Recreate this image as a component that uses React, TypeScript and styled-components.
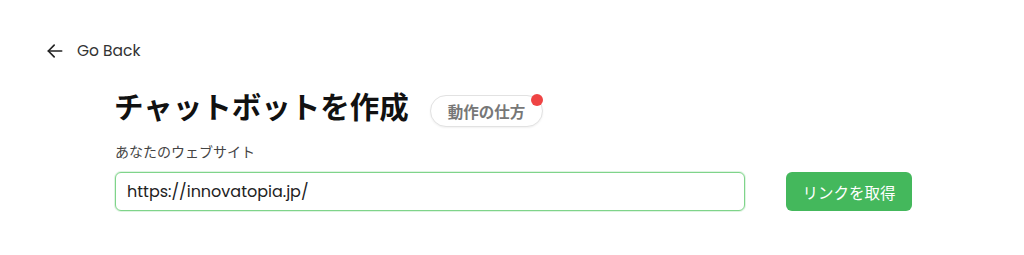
import { FC } from 'react'
import styled, { createGlobalStyle } from 'styled-components'

const GlobalStyle = createGlobalStyle`
  body {
    margin: 0;
    background: #ffffff;
    font-family: Poppins, "Open Sans", "Noto Sans CJK JP", sans-serif;
    color: #222;
  }
`

const Page = styled.div`
  padding: 41px 0 0 45px;
  height: 255px;
  box-sizing: border-box;
  display: flex;
  flex-direction: column;
  align-items: flex-start;
`
const BackLink = styled.a`
  display: flex;
  align-items: center;
  gap: 12px;
  height: 20px;
  line-height: 20px;
  font-size: 15.5px;
  color: #333;
  text-decoration: none;
  cursor: pointer;
`
const Main = styled.div`
  margin: 27px 0 0 70px;
  display: flex;
  flex-direction: column;
`
const TitleRow = styled.div`
  display: flex;
  align-items: flex-start;
  gap: 21px;
`
const Title = styled.h1`
  margin: 0 0 0 -1px;
  font-family: "Noto Sans CJK JP", sans-serif;
  font-size: 29.5px;
  line-height: 35px;
  font-weight: 700;
  color: #111;
`
const Badge = styled.button`
  position: relative;
  margin-top: 7px;
  height: 32px;
  padding: 0 17px;
  border: 1px solid #e2e2e2;
  border-radius: 16px;
  background: #fff;
  font-family: "Noto Sans CJK JP", sans-serif;
  font-size: 15.5px;
  font-weight: 700;
  color: #777;
  box-shadow: 0 1px 2px rgba(0, 0, 0, 0.06);
`
const Dot = styled.span`
  position: absolute;
  top: -2px;
  right: -1px;
  width: 12px;
  height: 12px;
  border-radius: 50%;
  background: #ef4444;
`
const Label = styled.div`
  margin-top: 14px;
  font-family: "Noto Sans CJK JP", sans-serif;
  font-size: 14px;
  line-height: 21px;
  color: #444;
`
const FormRow = styled.div`
  margin-top: 10px;
  display: flex;
  align-items: center;
  gap: 41px;
`
const UrlInput = styled.input`
  width: 630px;
  height: 39px;
  box-sizing: border-box;
  padding: 0 11px;
  border: 1px solid #7fd48a;
  border-radius: 6px;
  box-shadow: 0 0 0 1px rgba(127, 212, 138, 0.25);
  font-family: inherit;
  font-size: 16px;
  color: #222;
  outline: none;
`
const Submit = styled.button`
  width: 126px;
  height: 39px;
  border: none;
  border-radius: 6px;
  background: #44b85c;
  color: #fff;
  font-family: "Noto Sans CJK JP", sans-serif;
  font-size: 15.5px;
  cursor: pointer;
`

const App: FC = () => (
  <>
    <GlobalStyle />
    <Page>
      <BackLink>
        <svg width="20" height="20" viewBox="0 0 24 24" fill="none" stroke="#222" strokeWidth="2" strokeLinecap="round" strokeLinejoin="round">
          <path d="M20 12H4" />
          <path d="M11 19l-7-7 7-7" />
        </svg>
        Go Back
      </BackLink>
      <Main>
        <TitleRow>
          <Title>チャットボットを作成</Title>
          <Badge>
            動作の仕方
            <Dot />
          </Badge>
        </TitleRow>
        <Label>あなたのウェブサイト</Label>
        <FormRow>
          <UrlInput defaultValue={'https://innovatopia.jp/'} />
          <Submit>リンクを取得</Submit>
        </FormRow>
      </Main>
    </Page>
  </>
)

export default App
